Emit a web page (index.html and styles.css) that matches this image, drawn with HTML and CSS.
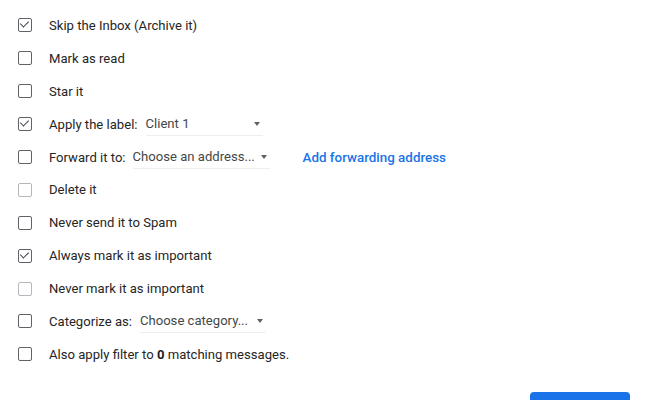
FILE: index.html
```html
<!DOCTYPE html>
<html>
<head>
<meta charset="utf-8">
<link rel="stylesheet" href="styles.css">
</head>
<body>
<div class="page">
  <ul class="options">
    <li class="row"><span class="cb checked"></span><span class="label">Skip the Inbox (Archive it)</span></li>
    <li class="row"><span class="cb"></span><span class="label">Mark as read</span></li>
    <li class="row"><span class="cb"></span><span class="label">Star it</span></li>
    <li class="row"><span class="cb checked"></span><span class="label">Apply the label:</span>
      <span class="select sel-label"><span class="sel-text">Client 1</span><span class="arrow"></span></span></li>
    <li class="row"><span class="cb"></span><span class="label">Forward it to:</span>
      <span class="select sel-fwd"><span class="sel-text">Choose an address...</span><span class="arrow"></span></span>
      <a class="link">Add forwarding address</a></li>
    <li class="row"><span class="cb disabled"></span><span class="label">Delete it</span></li>
    <li class="row"><span class="cb"></span><span class="label">Never send it to Spam</span></li>
    <li class="row"><span class="cb checked"></span><span class="label">Always mark it as important</span></li>
    <li class="row"><span class="cb disabled"></span><span class="label">Never mark it as important</span></li>
    <li class="row"><span class="cb"></span><span class="label">Categorize as:</span>
      <span class="select sel-cat"><span class="sel-text">Choose category...</span><span class="arrow"></span></span></li>
    <li class="row"><span class="cb"></span><span class="label">Also apply filter to <b>0</b> matching messages.</span></li>
  </ul>
  <div class="actions"><button class="primary">Create filter</button></div>
</div>
</body>
</html>
```
FILE: styles.css
```css
html, body {
  margin: 0;
  padding: 0;
  background: #ffffff;
}
body {
  font-family: Roboto, "Liberation Sans", Arial, sans-serif;
  font-size: 13.1px;
  color: #252525;
  overflow: hidden;
  height: 400px;
}
.page {
  padding: 9px 0 0 18px;
}
.options {
  list-style: none;
  margin: 0;
  padding: 0;
}
.row {
  display: flex;
  align-items: center;
  height: 32.9px;
}
.cb {
  box-sizing: border-box;
  width: 14px;
  height: 14px;
  border: 1.5px solid #5f6368;
  border-radius: 2px;
  margin-right: 17px;
  position: relative;
  flex: none;
}
.cb.disabled {
  border-color: #b4b7bb;
}
.cb.checked::after {
  content: "";
  position: absolute;
  left: 3px;
  top: 0px;
  width: 4px;
  height: 7px;
  border-right: 1.5px solid #3c4043;
  border-bottom: 1.5px solid #3c4043;
  transform: rotate(45deg);
}
.label b {
  font-weight: 700;
  color: #202124;
}
.select {
  display: inline-flex;
  align-items: center;
  justify-content: space-between;
  height: 22px;
  border-bottom: 1px solid #eeeeee;
  color: #444746;
}
.sel-label { width: 117px; margin-left: 8px; }
.sel-fwd { width: 137px; margin-left: 7px; }
.sel-cat { width: 126px; margin-left: 8px; }
.arrow {
  width: 0;
  height: 0;
  border-left: 3.5px solid transparent;
  border-right: 3.5px solid transparent;
  border-top: 4px solid #5f6368;
  margin-right: 3px;
}
.link {
  color: #1a73e8;
  font-weight: 500;
  font-size: 13.4px;
  margin-left: 33px;
  cursor: pointer;
}
.actions {
  display: flex;
  justify-content: flex-end;
  padding: 21px 20px 0 0;
}
.primary {
  width: 100px;
  height: 36px;
  padding-top: 14px;
  border: none;
  border-radius: 4px;
  background: #1a73e8;
  color: #fff;
  font-family: inherit;
  font-size: 14px;
  font-weight: 500;
}
```
